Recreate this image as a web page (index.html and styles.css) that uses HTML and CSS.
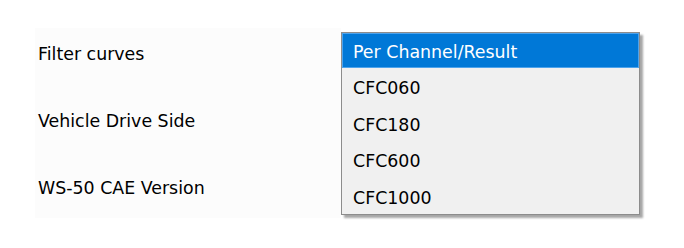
FILE: index.html
```html
<!DOCTYPE html>
<html lang="en">
<head>
    <meta charset="UTF-8">
    <title>Settings</title>
    <link rel="stylesheet" href="styles.css">
</head>
<body>

    <div class="panel">
        <div class="row">Filter curves</div>
        <div class="row">Vehicle Drive Side</div>
        <div class="row">WS-50 CAE Version</div>
    </div>

    <!-- open dropdown list for "Filter curves" -->
    <ul class="dropdown">
        <li class="item selected">Per Channel/Result</li>
        <li class="item">CFC060</li>
        <li class="item">CFC180</li>
        <li class="item">CFC600</li>
        <li class="item">CFC1000</li>
    </ul>

</body>
</html>
```

FILE: styles.css
```css
body {
    margin: 0;
    background-color: #fff;
    font-family: "DejaVu Sans", Verdana, sans-serif;
    font-size: 17.4px;
    color: #000;
    position: relative;
    height: 248px;
}

.panel {
    margin: 28px 0 0 35px;
    width: 306px;
    height: 190px;
    background-color: #fcfcfc;
    padding-top: 6px;
    box-sizing: border-box;
}

.row {
    height: 67px;
    line-height: 40px;
    padding-left: 3px;
}

/* popup list lies over the form */
.dropdown {
    position: absolute;
    left: 341px;
    top: 32px;
    width: 299px;
    margin: 0;
    padding: 0;
    list-style: none;
    background-color: #f0f0f0;
    border: 1px solid #8c8c8c;
    box-sizing: border-box;
    box-shadow: 3px 3px 2px rgba(0, 0, 0, 0.35);
}

.item {
    height: 36.5px;
    line-height: 41px;
    padding-left: 11px;
}

.item.selected {
    background-color: #0078d7;
    color: #fff;
    height: 33px;
    line-height: 36px;
    border: 1px solid #4da3ec;
    padding-left: 10px;
}
```
